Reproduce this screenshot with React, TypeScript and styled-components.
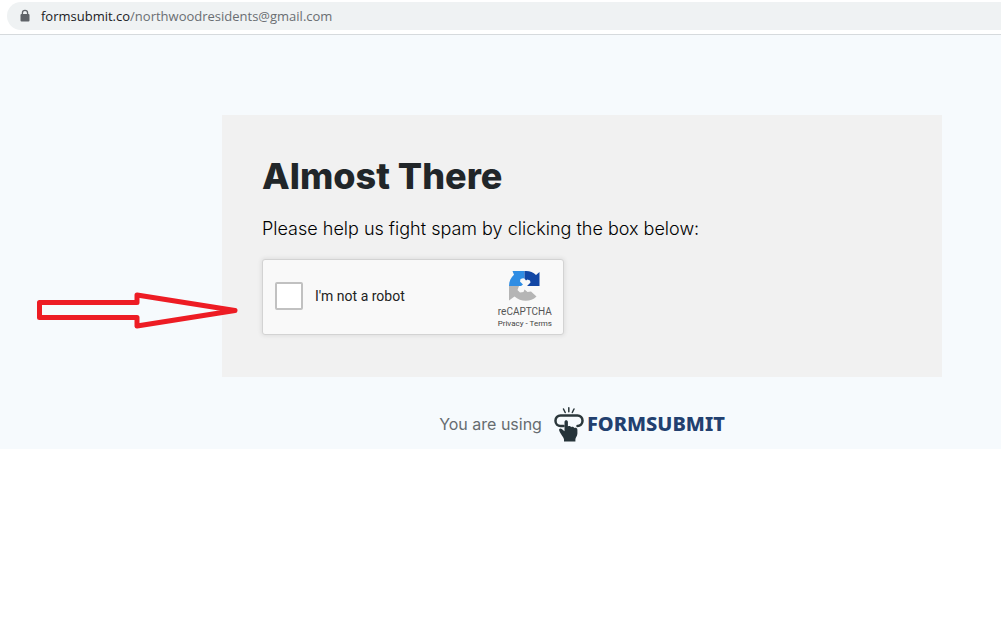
import React from "react";
import styled, { createGlobalStyle } from "styled-components";

const GlobalStyle = createGlobalStyle`
  * { box-sizing: border-box; }
  body {
    margin: 0;
    background: #ffffff;
    color: #212529;
    font-family: Inter, "Liberation Sans", sans-serif;
  }
`;

const BrowserBar = styled.header`
  padding: 2px 0 4px 7px;
  border-bottom: 1px solid #d6dadd;
  background: #ffffff;
`;

const AddressField = styled.div`
  display: flex;
  align-items: center;
  gap: 11px;
  height: 28px;
  padding-left: 13px;
  border-radius: 14px 0 0 14px;
  background: #eff2f3;
`;

const LockIcon = styled.svg`
  width: 10px;
  height: 14px;
  flex: none;
`;

const Address = styled.span`
  font: 13px/20px "Open Sans", "Noto Sans", sans-serif;
  color: #6a6e72;
  white-space: nowrap;
`;

const Domain = styled.span`
  color: #202124;
`;

const Page = styled.main`
  position: relative;
  padding: 80px 59px 6px 222px;
  background: #f6fafd;
`;

const Card = styled.section`
  padding: 39px 40px 42px;
  background: #f1f1f1;
`;

const Title = styled.h1`
  margin: 0;
  color: #212629;
  font-size: 36px;
  font-weight: 800;
  line-height: 44px;
`;

const Lead = styled.p`
  margin: 20px 0 19px;
  color: #000000;
  font-size: 18px;
  font-weight: 300;
  line-height: 22px;
`;

const Captcha = styled.div`
  display: flex;
  align-items: flex-start;
  justify-content: space-between;
  max-width: 302px;
  height: 76px;
  padding: 0 11px 0 12px;
  border: 1px solid #d3d3d3;
  border-radius: 3px;
  background: #f9f9f9;
  box-shadow: 0 0 4px 1px rgba(0, 0, 0, 0.08);
  font-family: Roboto, sans-serif;
`;

const RobotLabel = styled.label`
  display: flex;
  align-items: center;
  gap: 12px;
  padding-top: 22px;
  color: #222222;
  font-size: 14px;
  line-height: 18px;
`;

const RobotCheckbox = styled.input`
  appearance: none;
  width: 28px;
  height: 28px;
  margin: 0;
  border: 2px solid #c1c1c1;
  border-radius: 2px;
  background: #ffffff;
`;

const Brand = styled.div`
  display: flex;
  flex-direction: column;
  align-items: center;
  padding-top: 10px;
  color: #555555;
`;

const BrandMark = styled.svg`
  width: 31px;
  height: 31px;
`;

const BrandName = styled.span`
  margin-top: 5px;
  font-size: 10px;
  line-height: 12px;
`;

const BrandLinks = styled.nav`
  font-size: 8px;
  line-height: 12px;
  color: #333333;
`;

const BrandLink = styled.a`
  color: #444444;
  text-decoration: none;
`;

const Credit = styled.footer`
  display: flex;
  align-items: center;
  justify-content: center;
  gap: 12px;
  padding-top: 27px;
  color: #666c70;
  font-size: 16px;
  line-height: 24px;
`;

const LogoLink = styled.a`
  display: flex;
  align-items: center;
  gap: 3px;
  color: #22406f;
  font: 800 20px/28px "Noto Sans", "Open Sans", sans-serif;
  text-decoration: none;
`;

const HandIcon = styled.svg`
  width: 30px;
  height: 39px;
`;

const Arrow = styled.svg`
  position: absolute;
  left: 34px;
  top: 255px;
  width: 208px;
  height: 40px;
  pointer-events: none;
`;

export default function App() {
  return (
    <>
      <GlobalStyle />
      <BrowserBar>
        <AddressField>
          <LockIcon viewBox="0 0 10 14" aria-hidden="true">
            <path d="M2.4 6V4a2.6 2.6 0 0 1 5.2 0v2" fill="none" stroke="#5f6368" strokeWidth="1.3" />
            <rect x="0.5" y="5" width="9" height="7.5" rx="1" fill="#5f6368" />
          </LockIcon>
          <Address>
            <Domain>formsubmit.co</Domain>/northwoodresidents@gmail.com
          </Address>
        </AddressField>
      </BrowserBar>
      <Page>
        <Card>
          <Title>Almost There</Title>
          <Lead>Please help us fight spam by clicking the box below:</Lead>
          <Captcha>
            <RobotLabel htmlFor="robot">
              <RobotCheckbox id="robot" type="checkbox" />
              I'm not a robot
            </RobotLabel>
            <Brand>
              <BrandMark viewBox="0 0 31 31" aria-hidden="true">
                <path fill="#2f8de4" d="M3.500 1H15.500V8.500L14 8.200l-2.500.8-.5 2.500 3 3L12 16H0C0 11 2 7.500 5 4.800z" />
                <path fill="#1247a5" d="M15.500 1C20 .5 24 2 27 5l3.500-3V16H18l3.500-3.500-.5-2L18.500 9.500l-1.500 1-1.500-2z" />
                <path fill="#b5b5b5" d="M0 16h10l-1.500 4 2.500 2.500 3.500-.5 1-2.500 3 2.500 3.500-.5 5.500 5c-6 6-16 5.500-22 0L0 30.500z" />
              </BrandMark>
              <BrandName>reCAPTCHA</BrandName>
              <BrandLinks>
                <BrandLink href="#privacy">Privacy</BrandLink> - <BrandLink href="#terms">Terms</BrandLink>
              </BrandLinks>
            </Brand>
          </Captcha>
        </Card>
        <Credit>
          You are using
          <LogoLink href="#formsubmit">
            <HandIcon viewBox="0 0 30 39" aria-hidden="true">
              <g fill="none" stroke="#2b373b" strokeLinecap="round">
                <path d="M9.500 5l1.700 3.500M14.800 3.800v4M20 5l-1.700 3.500" strokeWidth="1.500" />
                <path d="M9.500 22H6.500a5 5 0 0 1-5-5v-.5a5 5 0 0 1 5-5h17a5 5 0 0 1 5 5v.5a5 5 0 0 1-5 5" strokeWidth="2.500" />
              </g>
              <path fill="#26343a" d="M10.500 18c0-2.300 3.400-2.300 3.400 0v4.500c.8-.8 2.800-.5 3.200.7.800-.7 2.800-.4 3.100.8 1.300-.6 3.200 0 3.200 1.700v3.800c0 2.800-2 4-2 5.800V37.500H10V35.500c0-1.900-3.400-5.200-4.800-9-.6-1.900 1.200-2.700 2.600-1.500l2.700 2.300z" />
            </HandIcon>
            FORMSUBMIT
          </LogoLink>
        </Credit>
        <Arrow viewBox="0 0 208 40" aria-hidden="true">
          <path d="M5.500 12.500H103V5L201 20.500L103 36V27.500H5.500Z" fill="none" stroke="#ed1c24" strokeWidth="5" strokeLinejoin="round" />
        </Arrow>
      </Page>
    </>
  );
}
